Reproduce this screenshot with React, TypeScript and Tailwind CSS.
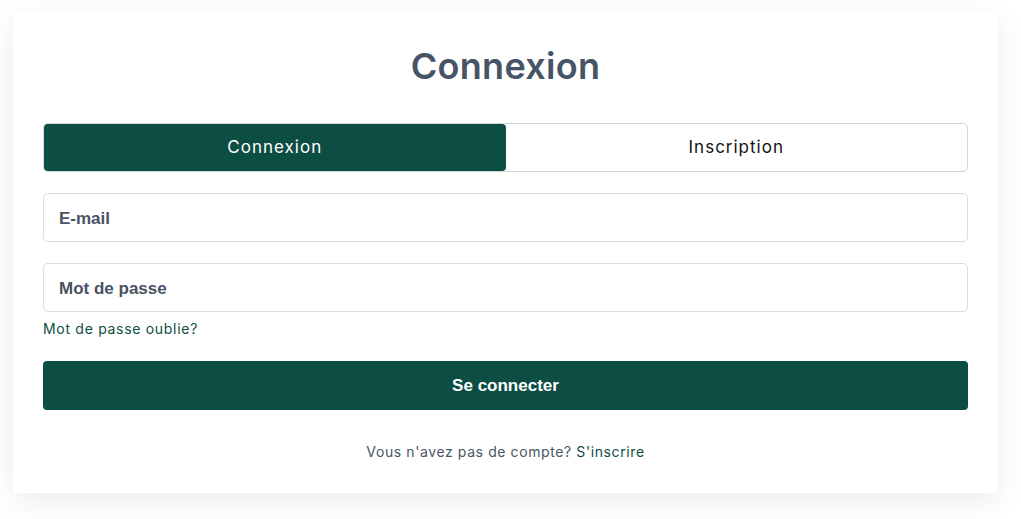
import React from "react";

export default function App() {
  return (
    <div className="min-h-[519px] w-full bg-white pt-[11px] pl-[13px] pr-[23px] pb-[27px]" style={{ fontFamily: "Inter, 'Noto Sans', sans-serif" }}>
      <div className="w-[985px] rounded-[4px] bg-white px-[30px] pt-[32px] pb-[31px] shadow-[0_8px_30px_rgba(0,0,0,0.08)]">
        <h1 className="text-center text-[36px] font-semibold leading-[46px] tracking-[0.3px] text-[#475466]">
          Connexion
        </h1>
        <div className="mt-[34px] flex h-[49px] rounded-[5px] border border-[#d6d6d6]">
          <button className="flex-1 rounded-[4px] bg-[#0d4e44] text-[17px] tracking-[1px] text-white">Connexion</button>
          <button className="flex-1 text-[17px] tracking-[1px] text-[#111]">Inscription</button>
        </div>
        <div className="mt-[21px] flex h-[49px] items-center rounded-[5px] border border-[#dcdcdc] px-[15px] pt-[2px]">
          <span className="text-[17px] font-bold text-[#4a5263]" style={{ fontFamily: "'Liberation Sans', Arial, sans-serif" }}>E-mail</span>
        </div>
        <div className="mt-[21px] flex h-[49px] items-center rounded-[5px] border border-[#dcdcdc] px-[15px] pt-[3px]">
          <span className="text-[17px] font-bold text-[#4a5263]" style={{ fontFamily: "'Liberation Sans', Arial, sans-serif" }}>Mot de passe</span>
        </div>
        <div className="mt-[6px] text-[14px] leading-[22px] tracking-[0.7px] text-[#0d4e44]">Mot de passe oublie?</div>
        <button className="mt-[21px] flex h-[49px] w-full items-center justify-center rounded-[4px] bg-[#0d4e44] text-[17px] font-bold text-white" style={{ fontFamily: "'Liberation Sans', Arial, sans-serif" }}>
          Se connecter
        </button>
        <p className="mt-[32px] text-center text-[14px] leading-[20px] tracking-[0.6px] text-[#4b5563]">
          Vous n'avez pas de compte? <span className="text-[#0d4e44]">S'inscrire</span>
        </p>
      </div>
    </div>
  );
}
